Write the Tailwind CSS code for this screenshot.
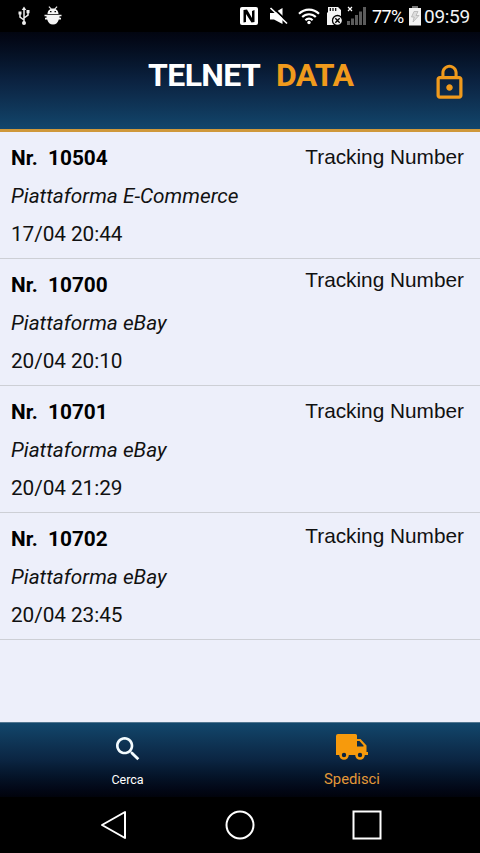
<!DOCTYPE html>
<html lang="it">
<head>
  <meta charset="UTF-8" />
  <meta name="viewport" content="width=device-width, initial-scale=1.0"/>
  <title>Telnet Data</title>
  <script src="https://cdn.jsdelivr.net/npm/@tailwindcss/browser@4"></script>
</head>
<body class="bg-black">
  <div class="w-[480px] h-[853px] flex flex-col overflow-hidden font-['Roboto',sans-serif]">

    <!-- Status Bar -->
    <div class="h-8 shrink-0 bg-black flex items-center text-white">
      <svg class="w-3 h-5 ml-[18px] shrink-0" viewBox="0 0 12 20" fill="none" stroke="#eee" stroke-width="1.5">
        <path d="M6 3v14M6 14L2 11V7M6 12l4-3V6"/>
        <path d="M6 .5L8.3 4H3.7zM.5 5.5h3v3h-3zM8.5 4h3v3.2h-3z" fill="#eee" stroke="none"/>
        <circle cx="6" cy="17" r="2" fill="#eee" stroke="none"/>
      </svg>
      <svg class="w-[18px] h-5 ml-[14px] shrink-0" viewBox="0 0 18 20" fill="#f4f4f4">
        <path d="M3.500 8C3.500 5.500 5 3.500 6.500 3L4.500 1l.8-.7L7.500 2.500h3L12.700.3l.8.700-2 2C13 3.500 14.500 5.500 14.500 8z"/>
        <path d="M.5 8.700h17v1.600H.5zM1 11.700h16v1.800h-2.200C14 16.500 12 18.500 9 18.500s-5-2-5.800-5H1z"/>
        <path d="M2.500 10h13v2h-13z"/>
        <path d="M6 5h1.500v1.200H6zM10.500 5H12v1.200h-1.500z" fill="#000"/>
      </svg>
      <svg class="w-[18px] h-[18px] ml-[178px] shrink-0" viewBox="0 0 18 18">
        <rect width="18" height="18" rx="2" fill="#fff"/>
        <path d="M3.500 3L7 2.500 12 11V4l2.500-1v12l-3 .5L6 7v8l-2.500.5z"/>
      </svg>
      <svg class="w-[19px] h-[18px] ml-[11px] shrink-0" viewBox="0 0 19 18">
        <path d="M1 6h4l8.500-5v16L5 12.500H1z" fill="#fff"/>
        <path d="M1.500-1.500L19 15" stroke="#000" stroke-width="2"/>
        <path d="M1.500 1L18 16.500" stroke="#fff" stroke-width="1.700"/>
      </svg>
      <svg class="w-[22px] h-[18px] ml-[10px] shrink-0" viewBox="0 0 22 18" fill="none" stroke="#fff" stroke-width="2.100">
        <path d="M1 6.800a14 14 0 0 1 20 0M4.200 10a9.600 9.600 0 0 1 13.600 0M7.400 13.200a5 5 0 0 1 7.200 0"/>
        <circle cx="11" cy="15.500" r="1.700" fill="#fff" stroke="none"/>
      </svg>
      <svg class="w-4 h-5 ml-[7px] shrink-0" viewBox="0 0 16 20">
        <path d="M1 1h10l3 3v15H0V7l1-1z" fill="#f4f4f4"/>
        <path d="M3.300 2v3M6 2v3M8.700 2v3" stroke="#000" stroke-width="1.200"/>
        <circle cx="10.500" cy="14.500" r="5" fill="#f4f4f4" stroke="#000" stroke-width="1.300"/>
        <path d="M8.300 12.300l4.400 4.400m0-4.400l-4.400 4.400" stroke="#000" stroke-width="1.400"/>
      </svg>
      <svg class="w-5 h-5 ml-[4px] shrink-0" viewBox="0 0 20 20">
        <path d="M1 1l4 4m0-4L1 5" stroke="#fff" stroke-width="1.200"/>
        <path d="M0 15h3v4H0zM4 12.500h3V19H4zM8 9h3v10H8zM12 5.500h3V19h-3zM16 1h3v18h-3z" fill="#5c5c5c"/>
      </svg>
      <span class="ml-[5px] mt-0.5 w-[33px] text-[18px] leading-5 tracking-[-0.6px]">77%</span>
      <svg class="w-3 h-5 ml-[4px] shrink-0" viewBox="0 0 12 20">
        <path d="M3.500 0h5v2H12v17.500H0V2h3.500z" fill="#f2f2f2"/>
        <path d="M3.500 0h5v2h-5z" fill="#777"/>
        <path d="M5 5.500h4L7 9.500h3L4 16l1.200-5H2.500z" fill="#ddd" stroke="#aaa" stroke-width=".7"/>
      </svg>
      <span class="ml-[3px] mt-0.5 text-[19px] leading-5 tracking-[-0.3px] text-gray-100">09:59</span>
    </div>

    <!-- Header -->
    <header class="h-[100px] shrink-0 border-b-3 border-[#cf983a] bg-linear-to-b from-[#020510] via-[#0b2240] to-[#12466c] flex items-start">
      <h1 class="ml-[148px] mt-[25px] w-[282px] text-[32px] leading-9 font-bold tracking-[-0.6px] text-white whitespace-nowrap"><span class="inline-block w-[128px]">TELNET</span><span class="text-[#f09a1c]">DATA</span></h1>
      <svg class="w-[39px] h-[39px] mt-[31px] shrink-0" viewBox="0 0 24 24" fill="#f09a1c">
        <path d="M12 17c1.100 0 2-.9 2-2s-.9-2-2-2-2 .9-2 2 .9 2 2 2zm6-9h-1V6c0-2.760-2.240-5-5-5S7 3.240 7 6v2H6c-1.100 0-2 .9-2 2v10c0 1.100.9 2 2 2h12c1.100 0 2-.9 2-2V10c0-1.100-.9-2-2-2zM8.900 6c0-1.710 1.390-3.100 3.100-3.100s3.100 1.390 3.100 3.100v2H8.900V6zM18 20H6V10h12v10z"/>
      </svg>
    </header>

    <!-- Orders -->
    <main class="h-[590px] shrink-0 bg-[#edeffa] text-[20.8px] leading-[38px] text-[#111]">
      <div class="h-[127px] border-b border-[#cdcfd5] pl-[11px] pr-4 pt-[7px] flex justify-between">
        <div>
          <p class="font-bold text-black whitespace-pre">Nr.  10504</p>
          <p class="italic">Piattaforma E-Commerce</p>
          <p class="tracking-[-0.08px]">17/04 20:44</p>
        </div>
        <p class="-mt-px font-['Liberation_Sans',sans-serif]">Tracking Number</p>
      </div>
      <div class="h-[127px] border-b border-[#cdcfd5] pl-[11px] pr-4 pt-[7px] flex justify-between">
        <div>
          <p class="font-bold text-black whitespace-pre">Nr.  10700</p>
          <p class="italic">Piattaforma eBay</p>
          <p class="tracking-[-0.08px]">20/04 20:10</p>
        </div>
        <p class="-mt-[5px] font-['Liberation_Sans',sans-serif]">Tracking Number</p>
      </div>
      <div class="h-[127px] border-b border-[#cdcfd5] pl-[11px] pr-4 pt-[7px] flex justify-between">
        <div>
          <p class="font-bold text-black whitespace-pre">Nr.  10701</p>
          <p class="italic">Piattaforma eBay</p>
          <p class="tracking-[-0.08px]">20/04 21:29</p>
        </div>
        <p class="-mt-px font-['Liberation_Sans',sans-serif]">Tracking Number</p>
      </div>
      <div class="h-[127px] border-b border-[#cdcfd5] pl-[11px] pr-4 pt-[7px] flex justify-between">
        <div>
          <p class="font-bold text-black whitespace-pre">Nr.  10702</p>
          <p class="italic">Piattaforma eBay</p>
          <p class="tracking-[-0.08px]">20/04 23:45</p>
        </div>
        <p class="-mt-[3px] font-['Liberation_Sans',sans-serif]">Tracking Number</p>
      </div>
    </main>

    <!-- Tab Bar -->
    <nav class="h-[75px] shrink-0 border-t border-[#527690] bg-linear-to-b from-[#12476c] via-[#0b2542] to-[#01030c] flex pl-4">
      <a class="w-[223px] flex flex-col items-center text-white">
        <svg class="w-8 h-8 mt-[10px]" viewBox="0 0 24 24" fill="#f4fcff">
          <path d="M15.500 14h-.79l-.28-.27C15.410 12.590 16 11.110 16 9.500 16 5.910 13.090 3 9.500 3S3 5.910 3 9.500 5.910 16 9.500 16c1.610 0 3.090-.59 4.230-1.570l.27.28v.79l5 4.990L20.490 19l-4.990-5zm-6 0C7.010 14 5 11.990 5 9.500S7.010 5 9.500 5 14 7.010 14 9.500 11.990 14 9.500 14z"/>
        </svg>
        <span class="mt-[7px] text-[12.500px] leading-4">Cerca</span>
      </a>
      <a class="w-[226px] flex flex-col items-center text-[#e39838]">
        <svg class="w-8 h-[26px] mt-[11px]" viewBox="0 0 32 26">
          <path d="M2 0h17.500Q21 0 21 1.500V5h3.500l6 6.500V18H32v3H0V2Q0 0 2 0z" fill="#f79a0c"/>
          <path d="M21 7h2.500l4 4.500v1H21z" fill="#0d2c48"/>
          <circle cx="8" cy="21" r="3.500" fill="#0c2440" stroke="#f79a0c" stroke-width="2.600"/>
          <circle cx="24" cy="21" r="3.500" fill="#0c2440" stroke="#f79a0c" stroke-width="2.600"/>
        </svg>
        <span class="mt-[11px] text-[14.800px] leading-4">Spedisci</span>
      </a>
    </nav>

    <!-- System Buttons -->
    <div class="h-14 shrink-0 bg-black flex pl-[100px] gap-[99px]">
      <svg class="w-7 h-[30px] mt-[13px]" viewBox="0 0 28 30" fill="none" stroke="#fff" stroke-width="2">
        <path d="M25 2v26L2 15z" stroke-linejoin="round"/>
      </svg>
      <svg class="w-[30px] h-[30px] mt-[13px] -ml-[2px]" viewBox="0 0 30 30" fill="none" stroke="#fff" stroke-width="2">
        <circle cx="15" cy="15" r="13.500"/>
      </svg>
      <svg class="w-[30px] h-[30px] mt-[13px] -ml-[2px]" viewBox="0 0 30 30" fill="none" stroke="#fff" stroke-width="2">
        <path d="M1.500 1.500h27v27h-27z"/>
      </svg>
    </div>
  </div>
</body>
</html>
